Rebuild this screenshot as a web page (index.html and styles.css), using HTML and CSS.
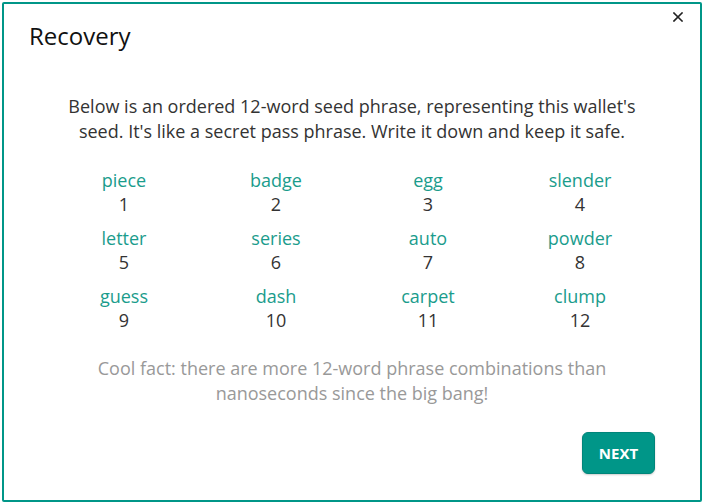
FILE: index.html
```html
<!DOCTYPE html>
<html>
<head>
<meta charset="utf-8">
<link rel="stylesheet" href="styles.css">
</head>
<body>
<div class="modal">
  <div class="header">
    <h1 class="title">Recovery</h1>
    <button class="close" aria-label="Close">
      <svg width="10" height="10" viewBox="0 0 10 10"><path d="M1 1L9 9M9 1L1 9" stroke="#222" stroke-width="1.6" stroke-linecap="square"/></svg>
    </button>
  </div>
  <p class="intro">Below is an ordered 12-word seed phrase, representing this wallet's seed. It's like a secret pass phrase. Write it down and keep it safe.</p>
  <div class="words">
    <div class="word"><span class="w">piece</span><span class="n">1</span></div>
    <div class="word"><span class="w">badge</span><span class="n">2</span></div>
    <div class="word"><span class="w">egg</span><span class="n">3</span></div>
    <div class="word"><span class="w">slender</span><span class="n">4</span></div>
    <div class="word"><span class="w">letter</span><span class="n">5</span></div>
    <div class="word"><span class="w">series</span><span class="n">6</span></div>
    <div class="word"><span class="w">auto</span><span class="n">7</span></div>
    <div class="word"><span class="w">powder</span><span class="n">8</span></div>
    <div class="word"><span class="w">guess</span><span class="n">9</span></div>
    <div class="word"><span class="w">dash</span><span class="n">10</span></div>
    <div class="word"><span class="w">carpet</span><span class="n">11</span></div>
    <div class="word"><span class="w">clump</span><span class="n">12</span></div>
  </div>
  <p class="fact">Cool fact: there are more 12-word phrase combinations than nanoseconds since the big bang!</p>
  <div class="footer">
    <button class="next">NEXT</button>
  </div>
</div>
</body>
</html>
```
FILE: styles.css
```css
html, body {
  margin: 0;
  padding: 0;
  background: #fff;
}
body {
  font-family: "Open Sans", "Noto Sans", sans-serif;
  width: 704px;
  height: 504px;
  overflow: hidden;
}
.modal {
  margin: 2px;
  width: 700px;
  height: 500px;
  box-sizing: border-box;
  border: 2px solid #009688;
  border-radius: 2px;
  background: #fff;
  display: flex;
  flex-direction: column;
}
.header {
  display: flex;
  justify-content: space-between;
  align-items: flex-start;
  padding: 17px 12px 0 25px;
}
.title {
  margin: 0;
  font-size: 24px;
  font-weight: 400;
  line-height: 30px;
  color: #111;
}
.close {
  border: 0;
  background: none;
  padding: 0;
  margin-top: -14px;
  width: 20px;
  height: 20px;
  display: flex;
  align-items: center;
  justify-content: center;
}
.intro {
  margin: 43px 0 0;
  text-align: center;
  font-size: 18px;
  line-height: 25px;
  color: #333;
  padding: 0 55px;
}
.words {
  margin: 24px auto 0;
  width: 608px;
  display: grid;
  grid-template-columns: repeat(4, 1fr);
  row-gap: 10px;
}
.word {
  display: flex;
  flex-direction: column;
  align-items: center;
  font-size: 18px;
  line-height: 24px;
}
.w {
  color: #1a9c8c;
}
.n {
  color: #333;
}
.fact {
  margin: 24px 0 0;
  text-align: center;
  font-size: 18px;
  line-height: 25px;
  color: #999;
  padding: 0 85px;
}
.footer {
  margin-top: auto;
  display: flex;
  justify-content: flex-end;
  padding: 0 45px 26px 0;
}
.next {
  width: 73px;
  height: 42px;
  border: 1px solid #00857a;
  border-radius: 6px;
  background: #009688;
  color: #fff;
  font-family: "Open Sans", sans-serif;
  font-weight: 700;
  font-size: 15px;
  box-shadow: 0 1px 2px rgba(0,0,0,0.2);
}
```
